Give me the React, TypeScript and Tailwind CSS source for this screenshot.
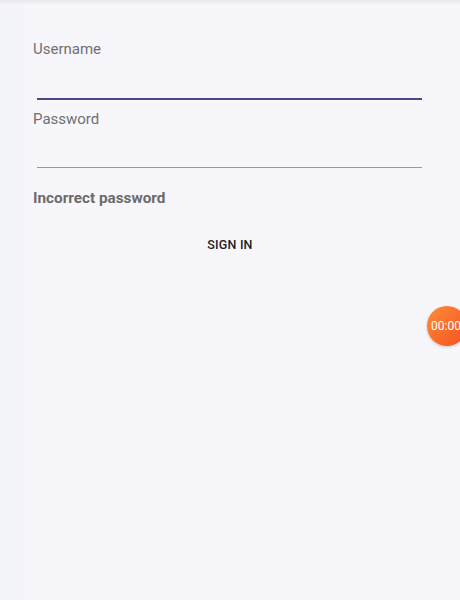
export default function App() {
  return (
    <div className="relative w-[460px] h-[600px] overflow-hidden bg-[linear-gradient(to_right,#f2f4f9_24px,#f7f6fb_24px)] font-['Roboto',sans-serif]">
      {/* top shade */}
      <div className="h-[6px] bg-gradient-to-b from-[#e9e8ed] to-[#f7f6fb]" />

      <div className="flex flex-col pl-[33px] pr-[38px]">
        {/* Username */}
        <label className="mt-[35px] text-[15px] leading-[16px] text-[#707070]">Username</label>
        <div className="ml-[4px] mt-[41px] h-[2px] bg-[#4b4684]" />

        {/* Password */}
        <label className="mt-[11px] text-[15px] leading-[16px] text-[#707070]">Password</label>
        <div className="ml-[4px] mt-[40px] h-px bg-[#9a9a9e]" />

        <p className="mt-[22px] text-[15.3px] leading-[16px] font-bold text-[#6b6b6b]">Incorrect password</p>
      </div>

      {/* sign in */}
      <div className="mt-[32px] flex justify-center">
        <button className="text-[12.5px] leading-[14px] font-medium text-[#1e1e1e] tracking-[0.2px]">SIGN IN</button>
      </div>

      {/* floating timer */}
      <div className="absolute left-[427px] top-[306px] w-[40px] h-[40px] rounded-full bg-gradient-to-br from-[#ff8a3a] to-[#f2501d] shadow-[0_1px_3px_rgba(0,0,0,0.2)] flex items-center pl-[4px]">
        <span className="text-[12px] text-white leading-none">00:00</span>
      </div>
    </div>
  )
}
